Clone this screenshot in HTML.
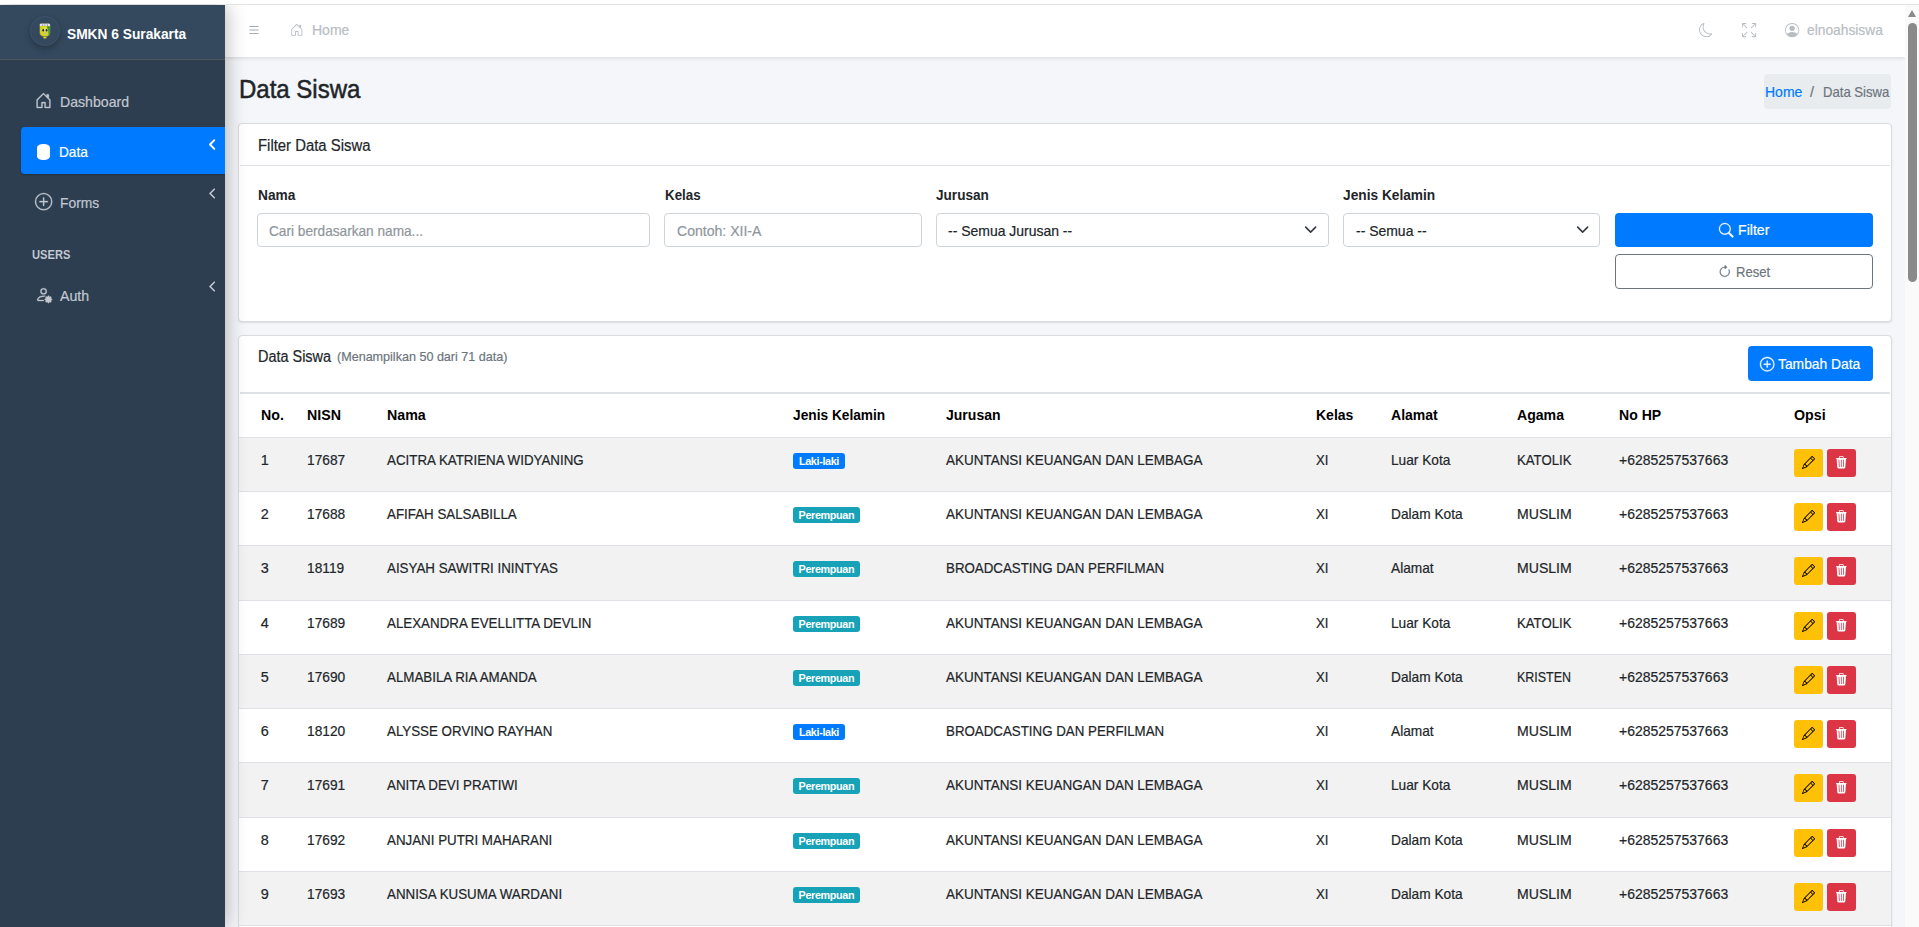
<!DOCTYPE html><html><head><meta charset="utf-8"><title>Data Siswa</title><style>
*{box-sizing:border-box;margin:0;padding:0}
html,body{width:1919px;height:927px;overflow:hidden;background:#fff;font-family:"Liberation Sans",sans-serif;font-size:14.4px;color:#212529}
#topband{position:absolute;left:0;top:0;width:1919px;height:4px;background:#fff;z-index:20}
#topline{position:absolute;left:225px;top:4px;width:1694px;height:1px;background:#e2e4e2;z-index:20}
#sidebar{position:absolute;left:0;top:5px;width:225px;height:922px;background:#2c3e50;box-shadow:0 0 20px rgba(0,0,0,.32);z-index:5;overflow:hidden}
#brand{position:absolute;left:0;top:0;width:225px;height:55px;background:#34495e;border-bottom:1px solid #50575c}
.logo{position:absolute;left:30px;top:11.2px;width:29.5px;height:29.5px;border-radius:50%;background:#34495e;border:1px solid #3d5368;box-shadow:0 3px 6px rgba(0,0,0,.25)}
.active{position:absolute;left:21px;top:122px;width:210px;height:46.7px;background:#007bff;border-radius:4px;box-shadow:0 1px 2px rgba(0,0,0,.2)}
#main{position:absolute;left:225px;top:5px;width:1680px;height:922px;background:#f4f6f9;overflow:hidden}
#navbar{position:absolute;left:0;top:0;width:1680px;height:52px;background:#fff;box-shadow:0 1px 4px rgba(0,0,0,.13);z-index:2}
#scroll{position:absolute;left:1905px;top:5px;width:14px;height:922px;background:#fafafa}
#scroll .arrow{position:absolute;left:3px;top:4.8px;width:0;height:0;border-left:4.5px solid transparent;border-right:4.5px solid transparent;border-bottom:7px solid #8a8a8a}
#scroll .thumb{position:absolute;left:3px;top:18px;width:9px;height:259px;border-radius:4.5px;background:#8a8a8a}
.card{position:absolute;background:#fff;border:1px solid #dadcdf;border-radius:4px;box-shadow:0 1px 2px rgba(0,0,0,.1)}
.t{position:absolute;white-space:nowrap;line-height:1;-webkit-text-stroke:0.2px currentColor}
.ic{position:absolute;overflow:visible}
.chev{width:8px;height:11px}
.dbic{position:absolute;left:36.6px;top:138.9px;width:13.6px;height:16px;background:#fff;border-radius:45% / 24%}
.bc{position:absolute;background:#e9ecef;border-radius:4px}
.hline,.row{position:absolute}
.inp{position:absolute;background:#fff;border:1px solid #ced4da;border-radius:4px}
.btnp{position:absolute;background:#007bff;border-radius:4px}
.btno{position:absolute;background:#fff;border:1px solid #6c757d;border-radius:4px}
.badge{position:absolute;height:15.8px;border-radius:3px;color:#fff;font-weight:700;font-size:10.8px;line-height:17px;text-align:center;letter-spacing:-0.35px}
.bw{position:absolute;width:29px;height:28px;background:#ffc107;border-radius:3px}
.bd{position:absolute;width:28.7px;height:28px;background:#dc3545;border-radius:3px}
</style></head><body><div id="topband"></div><div id="topline"></div><div id="sidebar">
<div id="brand"></div>
<div class="logo"><svg viewBox="0 0 12 16" style="position:absolute;left:8px;top:5.6px;width:11.8px;height:16px"><path d="M.6 1.6Q.6.3 2 .3H10Q11.4.3 11.4 1.6V10Q11.4 12.4 9 13.3L6 14 3 13.3Q.6 12.4.6 10Z" fill="#d6d618" stroke="#3b4a8a" stroke-width=".5"/><path d="M.9 1.6Q.9.6 2 .6H10Q11.1.6 11.1 1.6V3H.9Z" fill="#e4e4ee"/><circle cx="3.4" cy="1.9" r=".55" fill="#28307a"/><circle cx="6" cy="1.9" r=".55" fill="#28307a"/><circle cx="8.6" cy="1.9" r=".55" fill="#28307a"/><path d="M8 3.2H11.1V10Q11.1 11.8 9.6 12.6Q10.2 8 8 3.2Z" fill="#3f9a34"/><ellipse cx="4.4" cy="7.2" rx="1" ry="1.35" fill="#1b236e"/><ellipse cx="7.6" cy="7.2" rx="1" ry="1.35" fill="#1b236e"/><rect x="5.5" y="4.3" width="1" height="4.6" fill="#e9e9c9"/><circle cx="6" cy="10.6" r="1.05" fill="#b9b9e8"/><ellipse cx="6" cy="14.9" rx="1.9" ry=".75" fill="#e2e21e"/></svg></div>
<div class="t" style="left:66.5px;top:21.61px;font-size:14.4px;color:#fff;font-weight:700;letter-spacing:0px;transform:scaleX(0.9551);transform-origin:0 0;-webkit-text-stroke:0">SMKN 6 Surakarta</div>
<svg class="ic" style="left:35px;top:86.8px;width:17px;height:17px;color:#c2c7d0" viewBox="0 0 16 16" fill="currentColor" stroke="currentColor" stroke-width="0.35"><path d="M8.354 1.146a.5.5 0 0 0-.708 0l-6 6A.5.5 0 0 0 1.5 7.5v7a.5.5 0 0 0 .5.5h4.5a.5.5 0 0 0 .5-.5v-4h2v4a.5.5 0 0 0 .5.5H14a.5.5 0 0 0 .5-.5v-7a.5.5 0 0 0-.146-.354L13 5.793V2.5a.5.5 0 0 0-.5-.5h-1a.5.5 0 0 0-.5.5v1.293zM2.5 14V7.707l5.5-5.5 5.5 5.5V14H10v-4a.5.5 0 0 0-.5-.5h-3a.5.5 0 0 0-.5.5v4z"/></svg>
<div class="t" style="left:59.5px;top:89.81px;font-size:14.4px;color:#c2c7d0;font-weight:400;letter-spacing:0px;transform:scaleX(0.9808);transform-origin:0 0">Dashboard</div>
<div class="active"></div>
<div class="dbic"></div>
<div class="t" style="left:59px;top:139.61px;font-size:14.4px;color:#fff;font-weight:400;letter-spacing:0px;transform:scaleX(0.9474);transform-origin:0 0">Data</div>
<svg class="ic chev" style="left:208px;top:134.2px;color:#fff" viewBox="0 0 8 11"><path d="M6.3 1.2 2 5.5l4.3 4.3" fill="none" stroke="currentColor" stroke-width="1.9" stroke-linecap="round" stroke-linejoin="round"/></svg>
<svg class="ic" style="left:34.8px;top:187.9px;width:17.3px;height:17.3px;color:#c2c7d0" viewBox="0 0 16 16" fill="currentColor" stroke="currentColor" stroke-width="0.3"><path d="M8 15A7 7 0 1 1 8 1a7 7 0 0 1 0 14m0 1A8 8 0 1 0 8 0a8 8 0 0 0 0 16"/><path d="M8 4a.5.5 0 0 1 .5.5v3h3a.5.5 0 0 1 0 1h-3v3a.5.5 0 0 1-1 0v-3h-3a.5.5 0 0 1 0-1h3v-3A.5.5 0 0 1 8 4"/></svg>
<div class="t" style="left:59.5px;top:190.81px;font-size:14.4px;color:#c2c7d0;font-weight:400;letter-spacing:0px;transform:scaleX(0.9632);transform-origin:0 0">Forms</div>
<svg class="ic chev" style="left:208px;top:183.3px;color:#c2c7d0" viewBox="0 0 8 11"><path d="M6.3 1.2 2 5.5l4.3 4.3" fill="none" stroke="currentColor" stroke-width="1.6" stroke-linecap="round" stroke-linejoin="round"/></svg>
<div class="t" style="left:31.7px;top:242.79px;font-size:13.6px;color:#c2c7d0;font-weight:700;letter-spacing:0px;transform:scaleX(0.8200);transform-origin:0 0;-webkit-text-stroke:0">USERS</div>
<svg class="ic" style="left:35.2px;top:280.8px;width:17.2px;height:17.2px;color:#c2c7d0" viewBox="0 0 16 16" fill="currentColor" stroke="currentColor" stroke-width="0.3"><path d="M11 5a3 3 0 1 1-6 0 3 3 0 0 1 6 0M8 7a2 2 0 1 0 0-4 2 2 0 0 0 0 4m.256 7a4.5 4.5 0 0 1-.229-1.004H3c.001-.246.154-.986.832-1.664C4.484 10.68 5.711 10 8 10q.39 0 .74.025c.226-.341.496-.65.804-.918Q8.844 9.002 8 9c-5 0-6 3-6 4s1 1 1 1zm3.63-4.54c.18-.613 1.048-.613 1.229 0l.043.148a.64.64 0 0 0 .921.382l.136-.074c.561-.306 1.175.308.87.869l-.075.136a.64.64 0 0 0 .382.92l.149.045c.612.18.612 1.048 0 1.229l-.15.043a.64.64 0 0 0-.38.921l.074.136c.305.561-.309 1.175-.87.87l-.136-.075a.64.64 0 0 0-.92.382l-.045.149c-.18.612-1.048.612-1.229 0l-.043-.15a.64.64 0 0 0-.921-.38l-.136.074c-.561.305-1.175-.309-.87-.87l.075-.136a.64.64 0 0 0-.382-.92l-.148-.045c-.613-.18-.613-1.048 0-1.229l.148-.043a.64.64 0 0 0 .382-.921l-.074-.136c-.306-.561.308-1.175.869-.87l.136.075a.64.64 0 0 0 .92-.382z"/></svg>
<div class="t" style="left:59.5px;top:283.81px;font-size:14.4px;color:#c2c7d0;font-weight:400;letter-spacing:0px;transform:scaleX(0.9865);transform-origin:0 0">Auth</div>
<svg class="ic chev" style="left:208px;top:275.8px;color:#c2c7d0" viewBox="0 0 8 11"><path d="M6.3 1.2 2 5.5l4.3 4.3" fill="none" stroke="currentColor" stroke-width="1.6" stroke-linecap="round" stroke-linejoin="round"/></svg>
</div>
<div id="main">
<div id="navbar">
<svg class="ic" style="left:21.5px;top:18px;width:14px;height:14px;color:#a6acb2" viewBox="0 0 16 16" fill="currentColor"><path fill-rule="evenodd" d="M2.5 12a.5.5 0 0 1 .5-.5h10a.5.5 0 0 1 0 1H3a.5.5 0 0 1-.5-.5m0-4a.5.5 0 0 1 .5-.5h10a.5.5 0 0 1 0 1H3a.5.5 0 0 1-.5-.5m0-4a.5.5 0 0 1 .5-.5h10a.5.5 0 0 1 0 1H3a.5.5 0 0 1-.5-.5"/></svg>
<svg class="ic" style="left:64.80000000000001px;top:17.9px;width:13.6px;height:13.6px;color:#b8bdc2" viewBox="0 0 16 16" fill="currentColor"><path d="M8.354 1.146a.5.5 0 0 0-.708 0l-6 6A.5.5 0 0 0 1.5 7.5v7a.5.5 0 0 0 .5.5h4.5a.5.5 0 0 0 .5-.5v-4h2v4a.5.5 0 0 0 .5.5H14a.5.5 0 0 0 .5-.5v-7a.5.5 0 0 0-.146-.354L13 5.793V2.5a.5.5 0 0 0-.5-.5h-1a.5.5 0 0 0-.5.5v1.293zM2.5 14V7.707l5.5-5.5 5.5 5.5V14H10v-4a.5.5 0 0 0-.5-.5h-3a.5.5 0 0 0-.5.5v4z"/></svg>
<div class="t" style="left:86.60000000000002px;top:17.81px;font-size:14.4px;color:#b8bdc2;font-weight:400;letter-spacing:0px;transform:scaleX(0.9740);transform-origin:0 0">Home</div>
<svg class="ic" style="left:1473.9px;top:17.8px;width:14.1px;height:14.1px;color:#b8bdc2" viewBox="0 0 16 16" fill="currentColor"><path d="M6 .278a.77.77 0 0 1 .08.858 7.2 7.2 0 0 0-.878 3.46c0 4.021 3.278 7.277 7.318 7.277q.792-.001 1.533-.16a.79.79 0 0 1 .81.316.73.73 0 0 1-.031.893A8.35 8.35 0 0 1 8.344 16C3.734 16 0 12.286 0 7.71 0 4.266 2.114 1.312 5.124.06A.75.75 0 0 1 6 .278M4.858 1.311A7.27 7.27 0 0 0 1.025 7.71c0 4.02 3.279 7.276 7.319 7.276a7.32 7.32 0 0 0 5.205-2.162q-.506.063-1.029.063c-4.61 0-8.343-3.714-8.343-8.29 0-1.167.242-2.278.681-3.286"/></svg>
<svg class="ic" style="left:1516.6px;top:17.8px;width:14.2px;height:14.2px;color:#b8bdc2" viewBox="0 0 16 16" fill="currentColor"><path fill-rule="evenodd" d="M5.828 10.172a.5.5 0 0 0-.707 0l-4.096 4.096V11.5a.5.5 0 0 0-1 0v3.975a.5.5 0 0 0 .5.5H4.5a.5.5 0 0 0 0-1H1.732l4.096-4.096a.5.5 0 0 0 0-.707m4.344 0a.5.5 0 0 1 .707 0l4.096 4.096V11.5a.5.5 0 1 1 1 0v3.975a.5.5 0 0 1-.5.5H11.5a.5.5 0 0 1 0-1h2.768l-4.096-4.096a.5.5 0 0 1 0-.707m0-4.344a.5.5 0 0 0 .707 0l4.096-4.096V4.5a.5.5 0 1 0 1 0V.525a.5.5 0 0 0-.5-.5H11.5a.5.5 0 0 0 0 1h2.768l-4.096 4.096a.5.5 0 0 0 0 .707m-4.344 0a.5.5 0 0 1-.707 0L1.025 1.732V4.5a.5.5 0 0 1-1 0V.525a.5.5 0 0 1 .5-.5H4.5a.5.5 0 0 1 0 1H1.732l4.096 4.096a.5.5 0 0 1 0 .707"/></svg>
<svg class="ic" style="left:1560px;top:17.8px;width:14.3px;height:14.3px;color:#b8bdc2" viewBox="0 0 16 16" fill="currentColor"><path d="M11 6a3 3 0 1 1-6 0 3 3 0 0 1 6 0"/><path fill-rule="evenodd" d="M0 8a8 8 0 1 1 16 0A8 8 0 0 1 0 8m8-7a7 7 0 0 0-5.468 11.37C3.242 11.226 4.805 10 8 10s4.757 1.225 5.468 2.37A7 7 0 0 0 8 1"/></svg>
<div class="t" style="left:1582.2px;top:17.61px;font-size:14.4px;color:#b8bdc2;font-weight:400;letter-spacing:0px;transform:scaleX(0.9583);transform-origin:0 0">elnoahsiswa</div>
</div>
<div class="t" style="left:13.800000000000011px;top:71.67px;font-size:25.2px;color:#212529;font-weight:400;letter-spacing:0px;-webkit-text-stroke:0.5px currentColor;transform:scaleX(0.9529);transform-origin:0 0">Data Siswa</div>
<div class="bc" style="left:1539px;top:68.5px;width:127px;height:35px"></div>
<div class="t" style="left:1540px;top:79.81px;font-size:14.4px;color:#007bff;font-weight:400;letter-spacing:0px;transform:scaleX(0.9740);transform-origin:0 0">Home</div>
<div class="t" style="left:1585px;top:79.81px;font-size:14.4px;color:#6c757d;font-weight:400;letter-spacing:0px">/</div>
<div class="t" style="left:1597.5px;top:79.81px;font-size:14.4px;color:#6c757d;font-weight:400;letter-spacing:0px;transform:scaleX(0.9107);transform-origin:0 0">Data Siswa</div>
<div class="card" style="left:13px;top:118px;width:1653.5px;height:199px"></div>
<div class="hline" style="left:14.599999999999994px;top:160px;width:1650.7px;height:1px;background:#dee2e6"></div>
<div class="t" style="left:32.5px;top:132.99px;font-size:15.84px;color:#212529;font-weight:400;letter-spacing:0px;transform:scaleX(0.9403);transform-origin:0 0">Filter Data Siswa</div>
<div class="t" style="left:32.60000000000002px;top:183.21px;font-size:14.4px;color:#212529;font-weight:700;letter-spacing:0px;transform:scaleX(0.9541);transform-origin:0 0;-webkit-text-stroke:0">Nama</div>
<div class="t" style="left:439.6px;top:183.21px;font-size:14.4px;color:#212529;font-weight:700;letter-spacing:0px;transform:scaleX(0.9284);transform-origin:0 0;-webkit-text-stroke:0">Kelas</div>
<div class="t" style="left:711px;top:183.21px;font-size:14.4px;color:#212529;font-weight:700;letter-spacing:0px;transform:scaleX(0.9437);transform-origin:0 0;-webkit-text-stroke:0">Jurusan</div>
<div class="t" style="left:1118px;top:183.21px;font-size:14.4px;color:#212529;font-weight:700;letter-spacing:0px;transform:scaleX(0.9530);transform-origin:0 0;-webkit-text-stroke:0">Jenis Kelamin</div>
<div class="inp" style="left:32.30000000000001px;top:208px;width:393.2px;height:34px"></div>
<div class="t" style="left:44px;top:218.61px;font-size:14.4px;color:#8f969c;font-weight:400;letter-spacing:0px;transform:scaleX(0.9483);transform-origin:0 0">Cari berdasarkan nama...</div>
<div class="inp" style="left:439.20000000000005px;top:208px;width:257.6px;height:34px"></div>
<div class="t" style="left:451.70000000000005px;top:218.61px;font-size:14.4px;color:#8f969c;font-weight:400;letter-spacing:0px;transform:scaleX(0.9774);transform-origin:0 0">Contoh: XII-A</div>
<div class="inp" style="left:711.3px;top:208px;width:393.2px;height:34px"></div>
<div class="t" style="left:723px;top:218.61px;font-size:14.4px;color:#212529;font-weight:400;letter-spacing:0px;transform:scaleX(0.9703);transform-origin:0 0">-- Semua Jurusan --</div>
<svg class="ic" style="left:1079.3px;top:217.6px;width:13.3px;height:13.3px;color:#343a40" viewBox="0 0 16 16" fill="currentColor"><path fill="none" stroke="currentColor" stroke-linecap="round" stroke-linejoin="round" stroke-width="1.9" d="m2 5 6 6 6-6"/></svg>
<div class="inp" style="left:1118.3px;top:208px;width:257.2px;height:34px"></div>
<div class="t" style="left:1130.5px;top:218.61px;font-size:14.4px;color:#212529;font-weight:400;letter-spacing:0px;transform:scaleX(0.9698);transform-origin:0 0">-- Semua --</div>
<svg class="ic" style="left:1350.5px;top:217.8px;width:13.3px;height:13.3px;color:#343a40" viewBox="0 0 16 16" fill="currentColor"><path fill="none" stroke="currentColor" stroke-linecap="round" stroke-linejoin="round" stroke-width="1.9" d="m2 5 6 6 6-6"/></svg>
<div class="btnp" style="left:1390px;top:208px;width:258px;height:34px"></div>
<svg class="ic" style="left:1494px;top:217.5px;width:14.4px;height:14.4px;color:#fff" viewBox="0 0 16 16" fill="currentColor" stroke="currentColor" stroke-width="0.3"><path d="M11.742 10.344a6.5 6.5 0 1 0-1.397 1.398h-.001q.044.06.098.115l3.85 3.85a1 1 0 0 0 1.415-1.414l-3.85-3.85a1 1 0 0 0-.115-.1zM12 6.5a5.5 5.5 0 1 1-11 0 5.5 5.5 0 0 1 11 0"/></svg>
<div class="t" style="left:1512.5px;top:218.31px;font-size:14.4px;color:#fff;font-weight:400;letter-spacing:0px;transform:scaleX(0.9812);transform-origin:0 0">Filter</div>
<div class="btno" style="left:1390px;top:249.3px;width:258px;height:35px"></div>
<svg class="ic" style="left:1493.3px;top:259.6px;width:13.5px;height:13.5px;color:#6c757d" viewBox="0 0 16 16" fill="currentColor" stroke="currentColor" stroke-width="0.35"><path fill-rule="evenodd" d="M8 3a5 5 0 1 0 4.546 2.914.5.5 0 0 1 .908-.417A6 6 0 1 1 8 2z"/><path d="M8 4.466V.534a.25.25 0 0 1 .41-.192l2.36 1.966c.12.1.12.284 0 .384L8.41 4.658A.25.25 0 0 1 8 4.466"/></svg>
<div class="t" style="left:1511px;top:259.81px;font-size:14.4px;color:#6c757d;font-weight:400;letter-spacing:0px;transform:scaleX(0.9069);transform-origin:0 0">Reset</div>
<div class="card" style="left:13px;top:330px;width:1653.5px;height:700px"></div>
<div class="t" style="left:32.5px;top:343.99px;font-size:15.84px;color:#212529;font-weight:400;letter-spacing:0px;transform:scaleX(0.9126);transform-origin:0 0">Data Siswa</div>
<div class="t" style="left:112.30000000000001px;top:345.96px;font-size:12.8px;color:#6c757d;font-weight:400;letter-spacing:0px;transform:scaleX(0.9820);transform-origin:0 0">(Menampilkan 50 dari 71 data)</div>
<div class="btnp" style="left:1523px;top:341px;width:125px;height:35px"></div>
<svg class="ic" style="left:1534.5px;top:351.5px;width:14.4px;height:14.4px;color:#fff" viewBox="0 0 16 16" fill="currentColor" stroke="currentColor" stroke-width="0.45"><path d="M8 15A7 7 0 1 1 8 1a7 7 0 0 1 0 14m0 1A8 8 0 1 0 8 0a8 8 0 0 0 0 16"/><path d="M8 4a.5.5 0 0 1 .5.5v3h3a.5.5 0 0 1 0 1h-3v3a.5.5 0 0 1-1 0v-3h-3a.5.5 0 0 1 0-1h3v-3A.5.5 0 0 1 8 4"/></svg>
<div class="t" style="left:1552.5px;top:351.81px;font-size:14.4px;color:#fff;font-weight:400;letter-spacing:0px;transform:scaleX(0.9614);transform-origin:0 0">Tambah Data</div>
<div class="hline" style="left:14.599999999999994px;top:387px;width:1650.7px;height:2px;background:#dee2e6"></div>
<div class="t" style="left:35.80000000000001px;top:402.71px;font-size:14.4px;color:#000;font-weight:700;letter-spacing:0px;transform:scaleX(0.9871);transform-origin:0 0;-webkit-text-stroke:0">No.</div>
<div class="t" style="left:81.89999999999998px;top:402.71px;font-size:14.4px;color:#000;font-weight:700;letter-spacing:0px;transform:scaleX(0.9884);transform-origin:0 0;-webkit-text-stroke:0">NISN</div>
<div class="t" style="left:162.39999999999998px;top:402.71px;font-size:14.4px;color:#000;font-weight:700;letter-spacing:0px;transform:scaleX(0.9898);transform-origin:0 0;-webkit-text-stroke:0">Nama</div>
<div class="t" style="left:568.2px;top:402.71px;font-size:14.4px;color:#000;font-weight:700;letter-spacing:0px;transform:scaleX(0.9530);transform-origin:0 0;-webkit-text-stroke:0">Jenis Kelamin</div>
<div class="t" style="left:720.6px;top:402.71px;font-size:14.4px;color:#000;font-weight:700;letter-spacing:0px;transform:scaleX(0.9750);transform-origin:0 0;-webkit-text-stroke:0">Jurusan</div>
<div class="t" style="left:1090.8px;top:402.71px;font-size:14.4px;color:#000;font-weight:700;letter-spacing:0px;transform:scaleX(0.9740);transform-origin:0 0;-webkit-text-stroke:0">Kelas</div>
<div class="t" style="left:1166.4px;top:402.71px;font-size:14.4px;color:#000;font-weight:700;letter-spacing:0px;transform:scaleX(0.9750);transform-origin:0 0;-webkit-text-stroke:0">Alamat</div>
<div class="t" style="left:1292.3px;top:402.71px;font-size:14.4px;color:#000;font-weight:700;letter-spacing:0px;transform:scaleX(0.9792);transform-origin:0 0;-webkit-text-stroke:0">Agama</div>
<div class="t" style="left:1393.9px;top:402.71px;font-size:14.4px;color:#000;font-weight:700;letter-spacing:0px;transform:scaleX(0.9768);transform-origin:0 0;-webkit-text-stroke:0">No HP</div>
<div class="t" style="left:1569px;top:402.71px;font-size:14.4px;color:#000;font-weight:700;letter-spacing:0px;transform:scaleX(0.9875);transform-origin:0 0;-webkit-text-stroke:0">Opsi</div>
<div class="hline" style="left:14.599999999999994px;top:431.7px;width:1650.7px;height:1px;background:#dee2e6"></div>
<div class="row" style="left:14px;top:432px;width:1652px;height:54px;background:#f2f2f2"></div>
<div class="hline" style="left:14px;top:432px;width:1652px;height:1px;background:#dee2e6"></div>
<div class="t" style="left:35.80000000000001px;top:447.71px;font-size:14.4px;color:#212529;font-weight:400;letter-spacing:0px">1</div>
<div class="t" style="left:81.89999999999998px;top:447.71px;font-size:14.4px;color:#212529;font-weight:400;letter-spacing:0px;transform:scaleX(0.9540);transform-origin:0 0">17687</div>
<div class="t" style="left:162.39999999999998px;top:447.71px;font-size:14.4px;color:#212529;font-weight:400;letter-spacing:0px;transform:scaleX(0.9270);transform-origin:0 0">ACITRA KATRIENA WIDYANING</div>
<div class="badge" style="left:568.1px;top:448px;width:51.8px;background:#007bff">Laki-laki</div>
<div class="t" style="left:720.6px;top:447.71px;font-size:14.4px;color:#212529;font-weight:400;letter-spacing:0px;transform:scaleX(0.9360);transform-origin:0 0">AKUNTANSI KEUANGAN DAN LEMBAGA</div>
<div class="t" style="left:1090.8px;top:447.71px;font-size:14.4px;color:#212529;font-weight:400;letter-spacing:0px;transform:scaleX(0.9150);transform-origin:0 0">XI</div>
<div class="t" style="left:1166.4px;top:447.71px;font-size:14.4px;color:#212529;font-weight:400;letter-spacing:0px;transform:scaleX(0.9520);transform-origin:0 0">Luar Kota</div>
<div class="t" style="left:1292.3px;top:447.71px;font-size:14.4px;color:#212529;font-weight:400;letter-spacing:0px;transform:scaleX(0.9170);transform-origin:0 0">KATOLIK</div>
<div class="t" style="left:1393.9px;top:447.71px;font-size:14.4px;color:#212529;font-weight:400;letter-spacing:0px;transform:scaleX(0.9710);transform-origin:0 0">+6285257537663</div>
<div class="bw" style="left:1569px;top:444px"></div>
<svg class="ic" style="left:1577px;top:451px;width:13px;height:13px;color:#000" viewBox="0 0 16 16" fill="currentColor"><path d="M12.146.146a.5.5 0 0 1 .708 0l3 3a.5.5 0 0 1 0 .708l-10 10a.5.5 0 0 1-.168.11l-5 2a.5.5 0 0 1-.65-.65l2-5a.5.5 0 0 1 .11-.168zM11.207 2.5 13.5 4.793 14.793 3.5 12.5 1.207zm1.586 3L10.5 3.207 4 9.707V10h.5a.5.5 0 0 1 .5.5v.5h.5a.5.5 0 0 1 .5.5v.5h.293zm-9.761 5.175-.106.106-1.528 3.821 3.821-1.528.106-.106A.5.5 0 0 1 5 12.5V12h-.5a.5.5 0 0 1-.5-.5V11h-.5a.5.5 0 0 1-.468-.325"/></svg>
<div class="bd" style="left:1602.2px;top:444px"></div>
<svg class="ic" style="left:1610.1px;top:451px;width:12.6px;height:12.6px;color:#fff" viewBox="0 0 16 16" fill="currentColor"><path d="M11 1.5v1h3.5a.5.5 0 0 1 0 1h-.538l-.853 10.66A2 2 0 0 1 11.115 16h-6.23a2 2 0 0 1-1.994-1.84L2.038 3.5H1.5a.5.5 0 0 1 0-1H5v-1A1.5 1.5 0 0 1 6.5 0h3A1.5 1.5 0 0 1 11 1.5m-5 0v1h4v-1a.5.5 0 0 0-.5-.5h-3a.5.5 0 0 0-.5.5M4.5 5.029l.5 8.5a.5.5 0 1 0 .998-.06l-.5-8.5a.5.5 0 1 0-.998.06m6.53-.528a.5.5 0 0 0-.528.47l-.5 8.5a.5.5 0 0 0 .998.058l.5-8.5a.5.5 0 0 0-.47-.528M8 4.5a.5.5 0 0 0-.5.5v8.5a.5.5 0 0 0 1 0V5a.5.5 0 0 0-.5-.5"/></svg>
<div class="row" style="left:14px;top:486px;width:1652px;height:54px;background:#fff"></div>
<div class="hline" style="left:14px;top:486px;width:1652px;height:1px;background:#dee2e6"></div>
<div class="t" style="left:35.80000000000001px;top:501.71px;font-size:14.4px;color:#212529;font-weight:400;letter-spacing:0px">2</div>
<div class="t" style="left:81.89999999999998px;top:501.71px;font-size:14.4px;color:#212529;font-weight:400;letter-spacing:0px;transform:scaleX(0.9540);transform-origin:0 0">17688</div>
<div class="t" style="left:162.39999999999998px;top:501.71px;font-size:14.4px;color:#212529;font-weight:400;letter-spacing:0px;transform:scaleX(0.9270);transform-origin:0 0">AFIFAH SALSABILLA</div>
<div class="badge" style="left:568.1px;top:502px;width:66.7px;background:#17a2b8">Perempuan</div>
<div class="t" style="left:720.6px;top:501.71px;font-size:14.4px;color:#212529;font-weight:400;letter-spacing:0px;transform:scaleX(0.9360);transform-origin:0 0">AKUNTANSI KEUANGAN DAN LEMBAGA</div>
<div class="t" style="left:1090.8px;top:501.71px;font-size:14.4px;color:#212529;font-weight:400;letter-spacing:0px;transform:scaleX(0.9150);transform-origin:0 0">XI</div>
<div class="t" style="left:1166.4px;top:501.71px;font-size:14.4px;color:#212529;font-weight:400;letter-spacing:0px;transform:scaleX(0.9520);transform-origin:0 0">Dalam Kota</div>
<div class="t" style="left:1292.3px;top:501.71px;font-size:14.4px;color:#212529;font-weight:400;letter-spacing:0px;transform:scaleX(0.9780);transform-origin:0 0">MUSLIM</div>
<div class="t" style="left:1393.9px;top:501.71px;font-size:14.4px;color:#212529;font-weight:400;letter-spacing:0px;transform:scaleX(0.9710);transform-origin:0 0">+6285257537663</div>
<div class="bw" style="left:1569px;top:498px"></div>
<svg class="ic" style="left:1577px;top:505px;width:13px;height:13px;color:#000" viewBox="0 0 16 16" fill="currentColor"><path d="M12.146.146a.5.5 0 0 1 .708 0l3 3a.5.5 0 0 1 0 .708l-10 10a.5.5 0 0 1-.168.11l-5 2a.5.5 0 0 1-.65-.65l2-5a.5.5 0 0 1 .11-.168zM11.207 2.5 13.5 4.793 14.793 3.5 12.5 1.207zm1.586 3L10.5 3.207 4 9.707V10h.5a.5.5 0 0 1 .5.5v.5h.5a.5.5 0 0 1 .5.5v.5h.293zm-9.761 5.175-.106.106-1.528 3.821 3.821-1.528.106-.106A.5.5 0 0 1 5 12.5V12h-.5a.5.5 0 0 1-.5-.5V11h-.5a.5.5 0 0 1-.468-.325"/></svg>
<div class="bd" style="left:1602.2px;top:498px"></div>
<svg class="ic" style="left:1610.1px;top:505px;width:12.6px;height:12.6px;color:#fff" viewBox="0 0 16 16" fill="currentColor"><path d="M11 1.5v1h3.5a.5.5 0 0 1 0 1h-.538l-.853 10.66A2 2 0 0 1 11.115 16h-6.23a2 2 0 0 1-1.994-1.84L2.038 3.5H1.5a.5.5 0 0 1 0-1H5v-1A1.5 1.5 0 0 1 6.5 0h3A1.5 1.5 0 0 1 11 1.5m-5 0v1h4v-1a.5.5 0 0 0-.5-.5h-3a.5.5 0 0 0-.5.5M4.5 5.029l.5 8.5a.5.5 0 1 0 .998-.06l-.5-8.5a.5.5 0 1 0-.998.06m6.53-.528a.5.5 0 0 0-.528.47l-.5 8.5a.5.5 0 0 0 .998.058l.5-8.5a.5.5 0 0 0-.47-.528M8 4.5a.5.5 0 0 0-.5.5v8.5a.5.5 0 0 0 1 0V5a.5.5 0 0 0-.5-.5"/></svg>
<div class="row" style="left:14px;top:540px;width:1652px;height:55px;background:#f2f2f2"></div>
<div class="hline" style="left:14px;top:540px;width:1652px;height:1px;background:#dee2e6"></div>
<div class="t" style="left:35.80000000000001px;top:555.71px;font-size:14.4px;color:#212529;font-weight:400;letter-spacing:0px">3</div>
<div class="t" style="left:81.89999999999998px;top:555.71px;font-size:14.4px;color:#212529;font-weight:400;letter-spacing:0px;transform:scaleX(0.9540);transform-origin:0 0">18119</div>
<div class="t" style="left:162.39999999999998px;top:555.71px;font-size:14.4px;color:#212529;font-weight:400;letter-spacing:0px;transform:scaleX(0.9270);transform-origin:0 0">AISYAH SAWITRI ININTYAS</div>
<div class="badge" style="left:568.1px;top:556px;width:66.7px;background:#17a2b8">Perempuan</div>
<div class="t" style="left:720.6px;top:555.71px;font-size:14.4px;color:#212529;font-weight:400;letter-spacing:0px;transform:scaleX(0.9250);transform-origin:0 0">BROADCASTING DAN PERFILMAN</div>
<div class="t" style="left:1090.8px;top:555.71px;font-size:14.4px;color:#212529;font-weight:400;letter-spacing:0px;transform:scaleX(0.9150);transform-origin:0 0">XI</div>
<div class="t" style="left:1166.4px;top:555.71px;font-size:14.4px;color:#212529;font-weight:400;letter-spacing:0px;transform:scaleX(0.9520);transform-origin:0 0">Alamat</div>
<div class="t" style="left:1292.3px;top:555.71px;font-size:14.4px;color:#212529;font-weight:400;letter-spacing:0px;transform:scaleX(0.9780);transform-origin:0 0">MUSLIM</div>
<div class="t" style="left:1393.9px;top:555.71px;font-size:14.4px;color:#212529;font-weight:400;letter-spacing:0px;transform:scaleX(0.9710);transform-origin:0 0">+6285257537663</div>
<div class="bw" style="left:1569px;top:552px"></div>
<svg class="ic" style="left:1577px;top:559px;width:13px;height:13px;color:#000" viewBox="0 0 16 16" fill="currentColor"><path d="M12.146.146a.5.5 0 0 1 .708 0l3 3a.5.5 0 0 1 0 .708l-10 10a.5.5 0 0 1-.168.11l-5 2a.5.5 0 0 1-.65-.65l2-5a.5.5 0 0 1 .11-.168zM11.207 2.5 13.5 4.793 14.793 3.5 12.5 1.207zm1.586 3L10.5 3.207 4 9.707V10h.5a.5.5 0 0 1 .5.5v.5h.5a.5.5 0 0 1 .5.5v.5h.293zm-9.761 5.175-.106.106-1.528 3.821 3.821-1.528.106-.106A.5.5 0 0 1 5 12.5V12h-.5a.5.5 0 0 1-.5-.5V11h-.5a.5.5 0 0 1-.468-.325"/></svg>
<div class="bd" style="left:1602.2px;top:552px"></div>
<svg class="ic" style="left:1610.1px;top:559px;width:12.6px;height:12.6px;color:#fff" viewBox="0 0 16 16" fill="currentColor"><path d="M11 1.5v1h3.5a.5.5 0 0 1 0 1h-.538l-.853 10.66A2 2 0 0 1 11.115 16h-6.23a2 2 0 0 1-1.994-1.84L2.038 3.5H1.5a.5.5 0 0 1 0-1H5v-1A1.5 1.5 0 0 1 6.5 0h3A1.5 1.5 0 0 1 11 1.5m-5 0v1h4v-1a.5.5 0 0 0-.5-.5h-3a.5.5 0 0 0-.5.5M4.5 5.029l.5 8.5a.5.5 0 1 0 .998-.06l-.5-8.5a.5.5 0 1 0-.998.06m6.53-.528a.5.5 0 0 0-.528.47l-.5 8.5a.5.5 0 0 0 .998.058l.5-8.5a.5.5 0 0 0-.47-.528M8 4.5a.5.5 0 0 0-.5.5v8.5a.5.5 0 0 0 1 0V5a.5.5 0 0 0-.5-.5"/></svg>
<div class="row" style="left:14px;top:595px;width:1652px;height:54px;background:#fff"></div>
<div class="hline" style="left:14px;top:595px;width:1652px;height:1px;background:#dee2e6"></div>
<div class="t" style="left:35.80000000000001px;top:610.71px;font-size:14.4px;color:#212529;font-weight:400;letter-spacing:0px">4</div>
<div class="t" style="left:81.89999999999998px;top:610.71px;font-size:14.4px;color:#212529;font-weight:400;letter-spacing:0px;transform:scaleX(0.9540);transform-origin:0 0">17689</div>
<div class="t" style="left:162.39999999999998px;top:610.71px;font-size:14.4px;color:#212529;font-weight:400;letter-spacing:0px;transform:scaleX(0.9270);transform-origin:0 0">ALEXANDRA EVELLITTA DEVLIN</div>
<div class="badge" style="left:568.1px;top:611px;width:66.7px;background:#17a2b8">Perempuan</div>
<div class="t" style="left:720.6px;top:610.71px;font-size:14.4px;color:#212529;font-weight:400;letter-spacing:0px;transform:scaleX(0.9360);transform-origin:0 0">AKUNTANSI KEUANGAN DAN LEMBAGA</div>
<div class="t" style="left:1090.8px;top:610.71px;font-size:14.4px;color:#212529;font-weight:400;letter-spacing:0px;transform:scaleX(0.9150);transform-origin:0 0">XI</div>
<div class="t" style="left:1166.4px;top:610.71px;font-size:14.4px;color:#212529;font-weight:400;letter-spacing:0px;transform:scaleX(0.9520);transform-origin:0 0">Luar Kota</div>
<div class="t" style="left:1292.3px;top:610.71px;font-size:14.4px;color:#212529;font-weight:400;letter-spacing:0px;transform:scaleX(0.9170);transform-origin:0 0">KATOLIK</div>
<div class="t" style="left:1393.9px;top:610.71px;font-size:14.4px;color:#212529;font-weight:400;letter-spacing:0px;transform:scaleX(0.9710);transform-origin:0 0">+6285257537663</div>
<div class="bw" style="left:1569px;top:607px"></div>
<svg class="ic" style="left:1577px;top:614px;width:13px;height:13px;color:#000" viewBox="0 0 16 16" fill="currentColor"><path d="M12.146.146a.5.5 0 0 1 .708 0l3 3a.5.5 0 0 1 0 .708l-10 10a.5.5 0 0 1-.168.11l-5 2a.5.5 0 0 1-.65-.65l2-5a.5.5 0 0 1 .11-.168zM11.207 2.5 13.5 4.793 14.793 3.5 12.5 1.207zm1.586 3L10.5 3.207 4 9.707V10h.5a.5.5 0 0 1 .5.5v.5h.5a.5.5 0 0 1 .5.5v.5h.293zm-9.761 5.175-.106.106-1.528 3.821 3.821-1.528.106-.106A.5.5 0 0 1 5 12.5V12h-.5a.5.5 0 0 1-.5-.5V11h-.5a.5.5 0 0 1-.468-.325"/></svg>
<div class="bd" style="left:1602.2px;top:607px"></div>
<svg class="ic" style="left:1610.1px;top:614px;width:12.6px;height:12.6px;color:#fff" viewBox="0 0 16 16" fill="currentColor"><path d="M11 1.5v1h3.5a.5.5 0 0 1 0 1h-.538l-.853 10.66A2 2 0 0 1 11.115 16h-6.23a2 2 0 0 1-1.994-1.84L2.038 3.5H1.5a.5.5 0 0 1 0-1H5v-1A1.5 1.5 0 0 1 6.5 0h3A1.5 1.5 0 0 1 11 1.5m-5 0v1h4v-1a.5.5 0 0 0-.5-.5h-3a.5.5 0 0 0-.5.5M4.5 5.029l.5 8.5a.5.5 0 1 0 .998-.06l-.5-8.5a.5.5 0 1 0-.998.06m6.53-.528a.5.5 0 0 0-.528.47l-.5 8.5a.5.5 0 0 0 .998.058l.5-8.5a.5.5 0 0 0-.47-.528M8 4.5a.5.5 0 0 0-.5.5v8.5a.5.5 0 0 0 1 0V5a.5.5 0 0 0-.5-.5"/></svg>
<div class="row" style="left:14px;top:649px;width:1652px;height:54px;background:#f2f2f2"></div>
<div class="hline" style="left:14px;top:649px;width:1652px;height:1px;background:#dee2e6"></div>
<div class="t" style="left:35.80000000000001px;top:664.71px;font-size:14.4px;color:#212529;font-weight:400;letter-spacing:0px">5</div>
<div class="t" style="left:81.89999999999998px;top:664.71px;font-size:14.4px;color:#212529;font-weight:400;letter-spacing:0px;transform:scaleX(0.9540);transform-origin:0 0">17690</div>
<div class="t" style="left:162.39999999999998px;top:664.71px;font-size:14.4px;color:#212529;font-weight:400;letter-spacing:0px;transform:scaleX(0.9270);transform-origin:0 0">ALMABILA RIA AMANDA</div>
<div class="badge" style="left:568.1px;top:665px;width:66.7px;background:#17a2b8">Perempuan</div>
<div class="t" style="left:720.6px;top:664.71px;font-size:14.4px;color:#212529;font-weight:400;letter-spacing:0px;transform:scaleX(0.9360);transform-origin:0 0">AKUNTANSI KEUANGAN DAN LEMBAGA</div>
<div class="t" style="left:1090.8px;top:664.71px;font-size:14.4px;color:#212529;font-weight:400;letter-spacing:0px;transform:scaleX(0.9150);transform-origin:0 0">XI</div>
<div class="t" style="left:1166.4px;top:664.71px;font-size:14.4px;color:#212529;font-weight:400;letter-spacing:0px;transform:scaleX(0.9520);transform-origin:0 0">Dalam Kota</div>
<div class="t" style="left:1292.3px;top:664.71px;font-size:14.4px;color:#212529;font-weight:400;letter-spacing:0px;transform:scaleX(0.8660);transform-origin:0 0">KRISTEN</div>
<div class="t" style="left:1393.9px;top:664.71px;font-size:14.4px;color:#212529;font-weight:400;letter-spacing:0px;transform:scaleX(0.9710);transform-origin:0 0">+6285257537663</div>
<div class="bw" style="left:1569px;top:661px"></div>
<svg class="ic" style="left:1577px;top:668px;width:13px;height:13px;color:#000" viewBox="0 0 16 16" fill="currentColor"><path d="M12.146.146a.5.5 0 0 1 .708 0l3 3a.5.5 0 0 1 0 .708l-10 10a.5.5 0 0 1-.168.11l-5 2a.5.5 0 0 1-.65-.65l2-5a.5.5 0 0 1 .11-.168zM11.207 2.5 13.5 4.793 14.793 3.5 12.5 1.207zm1.586 3L10.5 3.207 4 9.707V10h.5a.5.5 0 0 1 .5.5v.5h.5a.5.5 0 0 1 .5.5v.5h.293zm-9.761 5.175-.106.106-1.528 3.821 3.821-1.528.106-.106A.5.5 0 0 1 5 12.5V12h-.5a.5.5 0 0 1-.5-.5V11h-.5a.5.5 0 0 1-.468-.325"/></svg>
<div class="bd" style="left:1602.2px;top:661px"></div>
<svg class="ic" style="left:1610.1px;top:668px;width:12.6px;height:12.6px;color:#fff" viewBox="0 0 16 16" fill="currentColor"><path d="M11 1.5v1h3.5a.5.5 0 0 1 0 1h-.538l-.853 10.66A2 2 0 0 1 11.115 16h-6.23a2 2 0 0 1-1.994-1.84L2.038 3.5H1.5a.5.5 0 0 1 0-1H5v-1A1.5 1.5 0 0 1 6.5 0h3A1.5 1.5 0 0 1 11 1.5m-5 0v1h4v-1a.5.5 0 0 0-.5-.5h-3a.5.5 0 0 0-.5.5M4.5 5.029l.5 8.5a.5.5 0 1 0 .998-.06l-.5-8.5a.5.5 0 1 0-.998.06m6.53-.528a.5.5 0 0 0-.528.47l-.5 8.5a.5.5 0 0 0 .998.058l.5-8.5a.5.5 0 0 0-.47-.528M8 4.5a.5.5 0 0 0-.5.5v8.5a.5.5 0 0 0 1 0V5a.5.5 0 0 0-.5-.5"/></svg>
<div class="row" style="left:14px;top:703px;width:1652px;height:54px;background:#fff"></div>
<div class="hline" style="left:14px;top:703px;width:1652px;height:1px;background:#dee2e6"></div>
<div class="t" style="left:35.80000000000001px;top:718.71px;font-size:14.4px;color:#212529;font-weight:400;letter-spacing:0px">6</div>
<div class="t" style="left:81.89999999999998px;top:718.71px;font-size:14.4px;color:#212529;font-weight:400;letter-spacing:0px;transform:scaleX(0.9540);transform-origin:0 0">18120</div>
<div class="t" style="left:162.39999999999998px;top:718.71px;font-size:14.4px;color:#212529;font-weight:400;letter-spacing:0px;transform:scaleX(0.9270);transform-origin:0 0">ALYSSE ORVINO RAYHAN</div>
<div class="badge" style="left:568.1px;top:719px;width:51.8px;background:#007bff">Laki-laki</div>
<div class="t" style="left:720.6px;top:718.71px;font-size:14.4px;color:#212529;font-weight:400;letter-spacing:0px;transform:scaleX(0.9250);transform-origin:0 0">BROADCASTING DAN PERFILMAN</div>
<div class="t" style="left:1090.8px;top:718.71px;font-size:14.4px;color:#212529;font-weight:400;letter-spacing:0px;transform:scaleX(0.9150);transform-origin:0 0">XI</div>
<div class="t" style="left:1166.4px;top:718.71px;font-size:14.4px;color:#212529;font-weight:400;letter-spacing:0px;transform:scaleX(0.9520);transform-origin:0 0">Alamat</div>
<div class="t" style="left:1292.3px;top:718.71px;font-size:14.4px;color:#212529;font-weight:400;letter-spacing:0px;transform:scaleX(0.9780);transform-origin:0 0">MUSLIM</div>
<div class="t" style="left:1393.9px;top:718.71px;font-size:14.4px;color:#212529;font-weight:400;letter-spacing:0px;transform:scaleX(0.9710);transform-origin:0 0">+6285257537663</div>
<div class="bw" style="left:1569px;top:715px"></div>
<svg class="ic" style="left:1577px;top:722px;width:13px;height:13px;color:#000" viewBox="0 0 16 16" fill="currentColor"><path d="M12.146.146a.5.5 0 0 1 .708 0l3 3a.5.5 0 0 1 0 .708l-10 10a.5.5 0 0 1-.168.11l-5 2a.5.5 0 0 1-.65-.65l2-5a.5.5 0 0 1 .11-.168zM11.207 2.5 13.5 4.793 14.793 3.5 12.5 1.207zm1.586 3L10.5 3.207 4 9.707V10h.5a.5.5 0 0 1 .5.5v.5h.5a.5.5 0 0 1 .5.5v.5h.293zm-9.761 5.175-.106.106-1.528 3.821 3.821-1.528.106-.106A.5.5 0 0 1 5 12.5V12h-.5a.5.5 0 0 1-.5-.5V11h-.5a.5.5 0 0 1-.468-.325"/></svg>
<div class="bd" style="left:1602.2px;top:715px"></div>
<svg class="ic" style="left:1610.1px;top:722px;width:12.6px;height:12.6px;color:#fff" viewBox="0 0 16 16" fill="currentColor"><path d="M11 1.5v1h3.5a.5.5 0 0 1 0 1h-.538l-.853 10.66A2 2 0 0 1 11.115 16h-6.23a2 2 0 0 1-1.994-1.84L2.038 3.5H1.5a.5.5 0 0 1 0-1H5v-1A1.5 1.5 0 0 1 6.5 0h3A1.5 1.5 0 0 1 11 1.5m-5 0v1h4v-1a.5.5 0 0 0-.5-.5h-3a.5.5 0 0 0-.5.5M4.5 5.029l.5 8.5a.5.5 0 1 0 .998-.06l-.5-8.5a.5.5 0 1 0-.998.06m6.53-.528a.5.5 0 0 0-.528.47l-.5 8.5a.5.5 0 0 0 .998.058l.5-8.5a.5.5 0 0 0-.47-.528M8 4.5a.5.5 0 0 0-.5.5v8.5a.5.5 0 0 0 1 0V5a.5.5 0 0 0-.5-.5"/></svg>
<div class="row" style="left:14px;top:757px;width:1652px;height:55px;background:#f2f2f2"></div>
<div class="hline" style="left:14px;top:757px;width:1652px;height:1px;background:#dee2e6"></div>
<div class="t" style="left:35.80000000000001px;top:772.71px;font-size:14.4px;color:#212529;font-weight:400;letter-spacing:0px">7</div>
<div class="t" style="left:81.89999999999998px;top:772.71px;font-size:14.4px;color:#212529;font-weight:400;letter-spacing:0px;transform:scaleX(0.9540);transform-origin:0 0">17691</div>
<div class="t" style="left:162.39999999999998px;top:772.71px;font-size:14.4px;color:#212529;font-weight:400;letter-spacing:0px;transform:scaleX(0.9270);transform-origin:0 0">ANITA DEVI PRATIWI</div>
<div class="badge" style="left:568.1px;top:773px;width:66.7px;background:#17a2b8">Perempuan</div>
<div class="t" style="left:720.6px;top:772.71px;font-size:14.4px;color:#212529;font-weight:400;letter-spacing:0px;transform:scaleX(0.9360);transform-origin:0 0">AKUNTANSI KEUANGAN DAN LEMBAGA</div>
<div class="t" style="left:1090.8px;top:772.71px;font-size:14.4px;color:#212529;font-weight:400;letter-spacing:0px;transform:scaleX(0.9150);transform-origin:0 0">XI</div>
<div class="t" style="left:1166.4px;top:772.71px;font-size:14.4px;color:#212529;font-weight:400;letter-spacing:0px;transform:scaleX(0.9520);transform-origin:0 0">Luar Kota</div>
<div class="t" style="left:1292.3px;top:772.71px;font-size:14.4px;color:#212529;font-weight:400;letter-spacing:0px;transform:scaleX(0.9780);transform-origin:0 0">MUSLIM</div>
<div class="t" style="left:1393.9px;top:772.71px;font-size:14.4px;color:#212529;font-weight:400;letter-spacing:0px;transform:scaleX(0.9710);transform-origin:0 0">+6285257537663</div>
<div class="bw" style="left:1569px;top:769px"></div>
<svg class="ic" style="left:1577px;top:776px;width:13px;height:13px;color:#000" viewBox="0 0 16 16" fill="currentColor"><path d="M12.146.146a.5.5 0 0 1 .708 0l3 3a.5.5 0 0 1 0 .708l-10 10a.5.5 0 0 1-.168.11l-5 2a.5.5 0 0 1-.65-.65l2-5a.5.5 0 0 1 .11-.168zM11.207 2.5 13.5 4.793 14.793 3.5 12.5 1.207zm1.586 3L10.5 3.207 4 9.707V10h.5a.5.5 0 0 1 .5.5v.5h.5a.5.5 0 0 1 .5.5v.5h.293zm-9.761 5.175-.106.106-1.528 3.821 3.821-1.528.106-.106A.5.5 0 0 1 5 12.5V12h-.5a.5.5 0 0 1-.5-.5V11h-.5a.5.5 0 0 1-.468-.325"/></svg>
<div class="bd" style="left:1602.2px;top:769px"></div>
<svg class="ic" style="left:1610.1px;top:776px;width:12.6px;height:12.6px;color:#fff" viewBox="0 0 16 16" fill="currentColor"><path d="M11 1.5v1h3.5a.5.5 0 0 1 0 1h-.538l-.853 10.66A2 2 0 0 1 11.115 16h-6.23a2 2 0 0 1-1.994-1.84L2.038 3.5H1.5a.5.5 0 0 1 0-1H5v-1A1.5 1.5 0 0 1 6.5 0h3A1.5 1.5 0 0 1 11 1.5m-5 0v1h4v-1a.5.5 0 0 0-.5-.5h-3a.5.5 0 0 0-.5.5M4.5 5.029l.5 8.5a.5.5 0 1 0 .998-.06l-.5-8.5a.5.5 0 1 0-.998.06m6.53-.528a.5.5 0 0 0-.528.47l-.5 8.5a.5.5 0 0 0 .998.058l.5-8.5a.5.5 0 0 0-.47-.528M8 4.5a.5.5 0 0 0-.5.5v8.5a.5.5 0 0 0 1 0V5a.5.5 0 0 0-.5-.5"/></svg>
<div class="row" style="left:14px;top:812px;width:1652px;height:54px;background:#fff"></div>
<div class="hline" style="left:14px;top:812px;width:1652px;height:1px;background:#dee2e6"></div>
<div class="t" style="left:35.80000000000001px;top:827.71px;font-size:14.4px;color:#212529;font-weight:400;letter-spacing:0px">8</div>
<div class="t" style="left:81.89999999999998px;top:827.71px;font-size:14.4px;color:#212529;font-weight:400;letter-spacing:0px;transform:scaleX(0.9540);transform-origin:0 0">17692</div>
<div class="t" style="left:162.39999999999998px;top:827.71px;font-size:14.4px;color:#212529;font-weight:400;letter-spacing:0px;transform:scaleX(0.9270);transform-origin:0 0">ANJANI PUTRI MAHARANI</div>
<div class="badge" style="left:568.1px;top:828px;width:66.7px;background:#17a2b8">Perempuan</div>
<div class="t" style="left:720.6px;top:827.71px;font-size:14.4px;color:#212529;font-weight:400;letter-spacing:0px;transform:scaleX(0.9360);transform-origin:0 0">AKUNTANSI KEUANGAN DAN LEMBAGA</div>
<div class="t" style="left:1090.8px;top:827.71px;font-size:14.4px;color:#212529;font-weight:400;letter-spacing:0px;transform:scaleX(0.9150);transform-origin:0 0">XI</div>
<div class="t" style="left:1166.4px;top:827.71px;font-size:14.4px;color:#212529;font-weight:400;letter-spacing:0px;transform:scaleX(0.9520);transform-origin:0 0">Dalam Kota</div>
<div class="t" style="left:1292.3px;top:827.71px;font-size:14.4px;color:#212529;font-weight:400;letter-spacing:0px;transform:scaleX(0.9780);transform-origin:0 0">MUSLIM</div>
<div class="t" style="left:1393.9px;top:827.71px;font-size:14.4px;color:#212529;font-weight:400;letter-spacing:0px;transform:scaleX(0.9710);transform-origin:0 0">+6285257537663</div>
<div class="bw" style="left:1569px;top:824px"></div>
<svg class="ic" style="left:1577px;top:831px;width:13px;height:13px;color:#000" viewBox="0 0 16 16" fill="currentColor"><path d="M12.146.146a.5.5 0 0 1 .708 0l3 3a.5.5 0 0 1 0 .708l-10 10a.5.5 0 0 1-.168.11l-5 2a.5.5 0 0 1-.65-.65l2-5a.5.5 0 0 1 .11-.168zM11.207 2.5 13.5 4.793 14.793 3.5 12.5 1.207zm1.586 3L10.5 3.207 4 9.707V10h.5a.5.5 0 0 1 .5.5v.5h.5a.5.5 0 0 1 .5.5v.5h.293zm-9.761 5.175-.106.106-1.528 3.821 3.821-1.528.106-.106A.5.5 0 0 1 5 12.5V12h-.5a.5.5 0 0 1-.5-.5V11h-.5a.5.5 0 0 1-.468-.325"/></svg>
<div class="bd" style="left:1602.2px;top:824px"></div>
<svg class="ic" style="left:1610.1px;top:831px;width:12.6px;height:12.6px;color:#fff" viewBox="0 0 16 16" fill="currentColor"><path d="M11 1.5v1h3.5a.5.5 0 0 1 0 1h-.538l-.853 10.66A2 2 0 0 1 11.115 16h-6.23a2 2 0 0 1-1.994-1.84L2.038 3.5H1.5a.5.5 0 0 1 0-1H5v-1A1.5 1.5 0 0 1 6.5 0h3A1.5 1.5 0 0 1 11 1.5m-5 0v1h4v-1a.5.5 0 0 0-.5-.5h-3a.5.5 0 0 0-.5.5M4.5 5.029l.5 8.5a.5.5 0 1 0 .998-.06l-.5-8.5a.5.5 0 1 0-.998.06m6.53-.528a.5.5 0 0 0-.528.47l-.5 8.5a.5.5 0 0 0 .998.058l.5-8.5a.5.5 0 0 0-.47-.528M8 4.5a.5.5 0 0 0-.5.5v8.5a.5.5 0 0 0 1 0V5a.5.5 0 0 0-.5-.5"/></svg>
<div class="row" style="left:14px;top:866px;width:1652px;height:54px;background:#f2f2f2"></div>
<div class="hline" style="left:14px;top:866px;width:1652px;height:1px;background:#dee2e6"></div>
<div class="t" style="left:35.80000000000001px;top:881.71px;font-size:14.4px;color:#212529;font-weight:400;letter-spacing:0px">9</div>
<div class="t" style="left:81.89999999999998px;top:881.71px;font-size:14.4px;color:#212529;font-weight:400;letter-spacing:0px;transform:scaleX(0.9540);transform-origin:0 0">17693</div>
<div class="t" style="left:162.39999999999998px;top:881.71px;font-size:14.4px;color:#212529;font-weight:400;letter-spacing:0px;transform:scaleX(0.9270);transform-origin:0 0">ANNISA KUSUMA WARDANI</div>
<div class="badge" style="left:568.1px;top:882px;width:66.7px;background:#17a2b8">Perempuan</div>
<div class="t" style="left:720.6px;top:881.71px;font-size:14.4px;color:#212529;font-weight:400;letter-spacing:0px;transform:scaleX(0.9360);transform-origin:0 0">AKUNTANSI KEUANGAN DAN LEMBAGA</div>
<div class="t" style="left:1090.8px;top:881.71px;font-size:14.4px;color:#212529;font-weight:400;letter-spacing:0px;transform:scaleX(0.9150);transform-origin:0 0">XI</div>
<div class="t" style="left:1166.4px;top:881.71px;font-size:14.4px;color:#212529;font-weight:400;letter-spacing:0px;transform:scaleX(0.9520);transform-origin:0 0">Dalam Kota</div>
<div class="t" style="left:1292.3px;top:881.71px;font-size:14.4px;color:#212529;font-weight:400;letter-spacing:0px;transform:scaleX(0.9780);transform-origin:0 0">MUSLIM</div>
<div class="t" style="left:1393.9px;top:881.71px;font-size:14.4px;color:#212529;font-weight:400;letter-spacing:0px;transform:scaleX(0.9710);transform-origin:0 0">+6285257537663</div>
<div class="bw" style="left:1569px;top:878px"></div>
<svg class="ic" style="left:1577px;top:885px;width:13px;height:13px;color:#000" viewBox="0 0 16 16" fill="currentColor"><path d="M12.146.146a.5.5 0 0 1 .708 0l3 3a.5.5 0 0 1 0 .708l-10 10a.5.5 0 0 1-.168.11l-5 2a.5.5 0 0 1-.65-.65l2-5a.5.5 0 0 1 .11-.168zM11.207 2.5 13.5 4.793 14.793 3.5 12.5 1.207zm1.586 3L10.5 3.207 4 9.707V10h.5a.5.5 0 0 1 .5.5v.5h.5a.5.5 0 0 1 .5.5v.5h.293zm-9.761 5.175-.106.106-1.528 3.821 3.821-1.528.106-.106A.5.5 0 0 1 5 12.5V12h-.5a.5.5 0 0 1-.5-.5V11h-.5a.5.5 0 0 1-.468-.325"/></svg>
<div class="bd" style="left:1602.2px;top:878px"></div>
<svg class="ic" style="left:1610.1px;top:885px;width:12.6px;height:12.6px;color:#fff" viewBox="0 0 16 16" fill="currentColor"><path d="M11 1.5v1h3.5a.5.5 0 0 1 0 1h-.538l-.853 10.66A2 2 0 0 1 11.115 16h-6.23a2 2 0 0 1-1.994-1.84L2.038 3.5H1.5a.5.5 0 0 1 0-1H5v-1A1.5 1.5 0 0 1 6.5 0h3A1.5 1.5 0 0 1 11 1.5m-5 0v1h4v-1a.5.5 0 0 0-.5-.5h-3a.5.5 0 0 0-.5.5M4.5 5.029l.5 8.5a.5.5 0 1 0 .998-.06l-.5-8.5a.5.5 0 1 0-.998.06m6.53-.528a.5.5 0 0 0-.528.47l-.5 8.5a.5.5 0 0 0 .998.058l.5-8.5a.5.5 0 0 0-.47-.528M8 4.5a.5.5 0 0 0-.5.5v8.5a.5.5 0 0 0 1 0V5a.5.5 0 0 0-.5-.5"/></svg>
<div class="row" style="left:14px;top:920px;width:1652px;height:54px;background:#fff"></div>
<div class="hline" style="left:14px;top:920px;width:1652px;height:1px;background:#dee2e6"></div>
<div class="t" style="left:35.80000000000001px;top:935.71px;font-size:14.4px;color:#212529;font-weight:400;letter-spacing:0px">10</div>
<div class="t" style="left:81.89999999999998px;top:935.71px;font-size:14.4px;color:#212529;font-weight:400;letter-spacing:0px;transform:scaleX(0.9540);transform-origin:0 0">17694</div>
<div class="t" style="left:162.39999999999998px;top:935.71px;font-size:14.4px;color:#212529;font-weight:400;letter-spacing:0px;transform:scaleX(0.9270);transform-origin:0 0">ANNISA NUR AINI</div>
<div class="badge" style="left:568.1px;top:936px;width:66.7px;background:#17a2b8">Perempuan</div>
<div class="t" style="left:720.6px;top:935.71px;font-size:14.4px;color:#212529;font-weight:400;letter-spacing:0px;transform:scaleX(0.9360);transform-origin:0 0">AKUNTANSI KEUANGAN DAN LEMBAGA</div>
<div class="t" style="left:1090.8px;top:935.71px;font-size:14.4px;color:#212529;font-weight:400;letter-spacing:0px;transform:scaleX(0.9150);transform-origin:0 0">XI</div>
<div class="t" style="left:1166.4px;top:935.71px;font-size:14.4px;color:#212529;font-weight:400;letter-spacing:0px;transform:scaleX(0.9520);transform-origin:0 0">Luar Kota</div>
<div class="t" style="left:1292.3px;top:935.71px;font-size:14.4px;color:#212529;font-weight:400;letter-spacing:0px;transform:scaleX(0.9780);transform-origin:0 0">MUSLIM</div>
<div class="t" style="left:1393.9px;top:935.71px;font-size:14.4px;color:#212529;font-weight:400;letter-spacing:0px;transform:scaleX(0.9710);transform-origin:0 0">+6285257537663</div>
<div class="bw" style="left:1569px;top:932px"></div>
<svg class="ic" style="left:1577px;top:939px;width:13px;height:13px;color:#000" viewBox="0 0 16 16" fill="currentColor"><path d="M12.146.146a.5.5 0 0 1 .708 0l3 3a.5.5 0 0 1 0 .708l-10 10a.5.5 0 0 1-.168.11l-5 2a.5.5 0 0 1-.65-.65l2-5a.5.5 0 0 1 .11-.168zM11.207 2.5 13.5 4.793 14.793 3.5 12.5 1.207zm1.586 3L10.5 3.207 4 9.707V10h.5a.5.5 0 0 1 .5.5v.5h.5a.5.5 0 0 1 .5.5v.5h.293zm-9.761 5.175-.106.106-1.528 3.821 3.821-1.528.106-.106A.5.5 0 0 1 5 12.5V12h-.5a.5.5 0 0 1-.5-.5V11h-.5a.5.5 0 0 1-.468-.325"/></svg>
<div class="bd" style="left:1602.2px;top:932px"></div>
<svg class="ic" style="left:1610.1px;top:939px;width:12.6px;height:12.6px;color:#fff" viewBox="0 0 16 16" fill="currentColor"><path d="M11 1.5v1h3.5a.5.5 0 0 1 0 1h-.538l-.853 10.66A2 2 0 0 1 11.115 16h-6.23a2 2 0 0 1-1.994-1.84L2.038 3.5H1.5a.5.5 0 0 1 0-1H5v-1A1.5 1.5 0 0 1 6.5 0h3A1.5 1.5 0 0 1 11 1.5m-5 0v1h4v-1a.5.5 0 0 0-.5-.5h-3a.5.5 0 0 0-.5.5M4.5 5.029l.5 8.5a.5.5 0 1 0 .998-.06l-.5-8.5a.5.5 0 1 0-.998.06m6.53-.528a.5.5 0 0 0-.528.47l-.5 8.5a.5.5 0 0 0 .998.058l.5-8.5a.5.5 0 0 0-.47-.528M8 4.5a.5.5 0 0 0-.5.5v8.5a.5.5 0 0 0 1 0V5a.5.5 0 0 0-.5-.5"/></svg>
</div>
<div id="scroll"><div class="arrow"></div><div class="thumb"></div></div></body></html>
